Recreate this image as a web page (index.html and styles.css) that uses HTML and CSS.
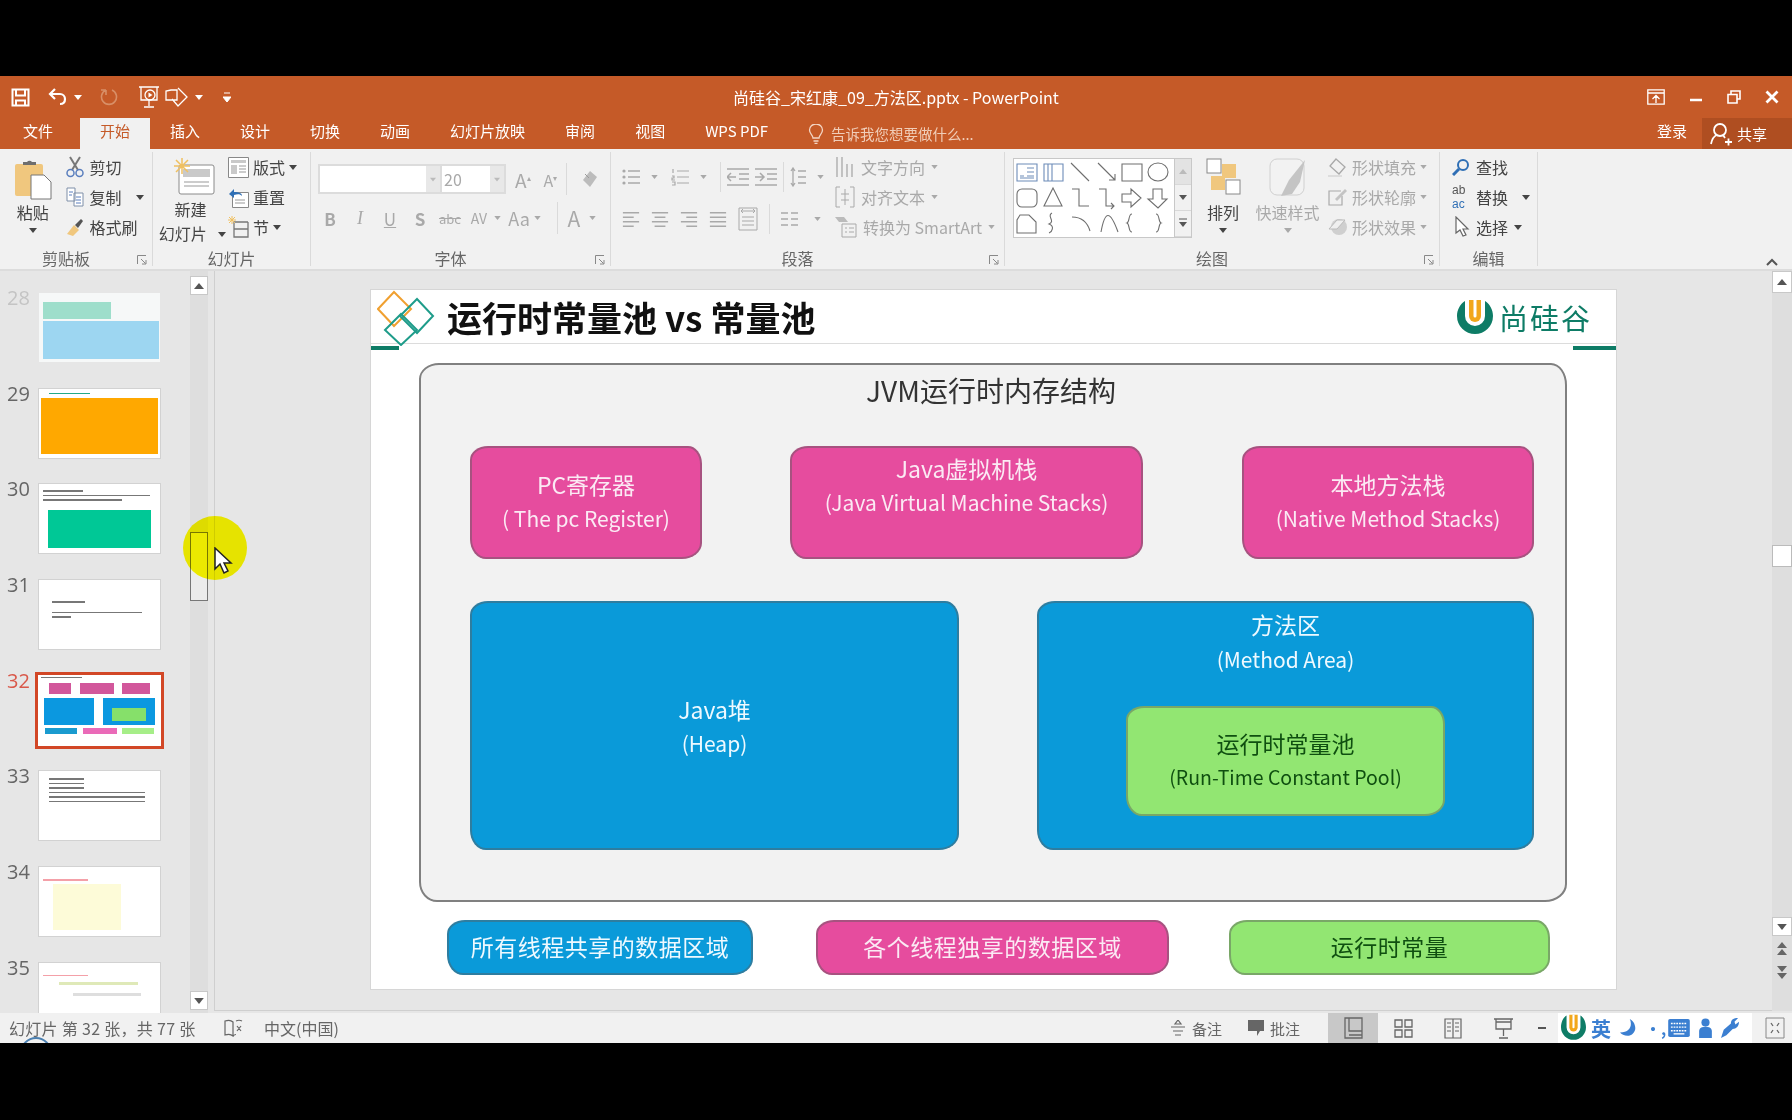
FILE: index.html
```html
<!DOCTYPE html>
<html lang="zh-CN">
<head>
<meta charset="UTF-8">
<title>尚硅谷_宋红康_09_方法区.pptx - PowerPoint</title>
<link rel="stylesheet" href="styles.css">
</head>
<body>
<!-- shared icons -->
<svg class="sprite" width="0" height="0">
  <symbol id="caret" viewBox="0 0 8 5"><path d="M0 0h8L4 5z" fill="currentColor"/></symbol>
  <symbol id="launcher" viewBox="0 0 10 10"><path d="M.5 9V.5H9M4 4l4.500 4.500M9 5v4H5" fill="none" stroke="currentColor"/></symbol>
  <symbol id="lines-left" viewBox="0 0 20 18"><path d="M1 2h18M1 7h12M1 12h18M1 17h12" stroke="currentColor" stroke-width="1.500"/></symbol>
  <symbol id="lines-center" viewBox="0 0 20 18"><path d="M1 2h18M4 7h12M1 12h18M4 17h12" stroke="currentColor" stroke-width="1.500"/></symbol>
  <symbol id="lines-right" viewBox="0 0 20 18"><path d="M1 2h18M7 7h12M1 12h18M7 17h12" stroke="currentColor" stroke-width="1.500"/></symbol>
  <symbol id="lines-full" viewBox="0 0 20 18"><path d="M1 2h18M1 7h18M1 12h18M1 17h18" stroke="currentColor" stroke-width="1.500"/></symbol>
  <symbol id="arrow-up" viewBox="0 0 10 6"><path d="M0 6h10L5 0z" fill="currentColor"/></symbol>
</svg>

<div class="window">
  <header class="titlebar">
    <div class="qat">
      <svg class="qat-save" width="19" height="19" viewBox="0 0 19 19"><path d="M1.500 1.500h16v16h-16zM5 1.500v6h9v-6M5 17.500v-5h9v5" fill="none" stroke="#fff" stroke-width="2"/></svg>
      <svg class="qat-undo" width="20" height="18" viewBox="0 0 20 18"><path d="M7 1L2 6l5 5M2 6h10a5 5 0 0 1 5 5c0 3-2 5-5 5" fill="none" stroke="#fff" stroke-width="2.200"/></svg>
      <svg class="qat-caret" width="8" height="5"><use href="#caret"/></svg>
      <svg class="qat-redo" width="18" height="18" viewBox="0 0 18 18"><path d="M12 2a7.500 7.500 0 1 1-6 0M6 2v5M6 2H1" fill="none" stroke="#d88f67" stroke-width="1.600"/></svg>
      <svg class="qat-show" width="22" height="24" viewBox="0 0 22 24"><path d="M1 2h20M3 2v13h16V2M11 15v6M6 22h10" fill="none" stroke="#fff" stroke-width="1.300"/><circle cx="12" cy="10" r="5" fill="none" stroke="#fff" stroke-width="1.300"/><path d="M10.500 7.500v5l4-2.500z" fill="#fff"/></svg>
      <svg class="qat-shape" width="24" height="24" viewBox="0 0 24 24"><path d="M6 5h6v10H1V6zM13 3l9 9-9 9-6-7" fill="none" stroke="#fff" stroke-width="1.300"/></svg>
      <svg class="qat-caret" width="8" height="5"><use href="#caret"/></svg>
      <svg class="qat-more" width="8" height="10" viewBox="0 0 8 10"><path d="M1 1h6M0 5h8L4 10z" fill="none" stroke="#fff"/><path d="M0 5h8L4 10z" fill="#fff"/></svg>
    </div>
    <div class="doc-title">尚硅谷_宋红康_09_方法区.pptx - PowerPoint</div>
    <div class="win-controls">
      <svg width="18" height="16" viewBox="0 0 18 16"><path d="M.8.8h16.400v14.400H.8zM1 4h16M9 14V7M5.500 10L9 6.500l3.500 3.500" fill="none" stroke="#fff" stroke-width="1.300"/></svg>
      <svg width="14" height="14" viewBox="0 0 14 14"><path d="M1 10h12" stroke="#fff" stroke-width="2.500"/></svg>
      <svg width="14" height="14" viewBox="0 0 14 14"><path d="M1 4.500h9v8.500H1zM4 4V1h9v8h-3" fill="none" stroke="#fff" stroke-width="1.600"/></svg>
      <svg width="14" height="14" viewBox="0 0 14 14"><path d="M1.500 1.500l11 11M12.500 1.500l-11 11" stroke="#fff" stroke-width="2.800"/></svg>
    </div>
  </header>

  <nav class="tabs">
    <span class="tab">文件</span>
    <span class="tab tab-active">开始</span>
    <span class="tab">插入</span>
    <span class="tab">设计</span>
    <span class="tab">切换</span>
    <span class="tab">动画</span>
    <span class="tab">幻灯片放映</span>
    <span class="tab">审阅</span>
    <span class="tab">视图</span>
    <span class="tab">WPS PDF</span>
    <span class="tell-me">
      <svg width="16" height="20" viewBox="0 0 16 20"><path d="M5 14c0-3-3.500-4-3.500-8a6.500 6 0 0 1 13 0c0 4-3.500 5-3.500 8zM5.500 17h5M6.500 19.500h3" fill="none" stroke="#f3d5c4" stroke-width="1.300"/></svg>
      告诉我您想要做什么...
    </span>
    <span class="signin">登录</span>
    <span class="share">
      <svg width="22" height="24" viewBox="0 0 22 24"><circle cx="10" cy="8" r="6" fill="none" stroke="#fff" stroke-width="1.800"/><path d="M1 22c1-5 3-8 6-9M13 13l2 3M15 20h7M18.500 16.500v7" fill="none" stroke="#fff" stroke-width="1.800"/></svg>
      共享
    </span>
  </nav>

  <section class="ribbon">
    <div class="group group-clip">
      <div class="group-body">
        <div class="big-btn big-paste">
          <svg width="38" height="42" viewBox="0 0 38 42"><rect x="1" y="6" width="28" height="32" rx="2" fill="#f0c77e"/><path d="M9 7V4h4a3 3 0 0 1 5 0h4v3z" fill="#6e6e6e"/><path d="M17 17h13l7 7v17H17z" fill="#fff" stroke="#777"/></svg>
          <span>粘贴</span>
          <svg class="big-caret" width="8" height="5"><use href="#caret"/></svg>
        </div>
        <div class="rib-col">
          <div class="rib-row">
            <svg width="18" height="22" viewBox="0 0 18 22"><path d="M4 1l8 13M14 1L6 14" stroke="#777" stroke-width="2"/><circle cx="4.500" cy="17" r="3.500" fill="none" stroke="#5b7fbe" stroke-width="1.500"/><circle cx="13.500" cy="17" r="3.500" fill="none" stroke="#5b7fbe" stroke-width="1.500"/></svg>
            <span>剪切</span>
          </div>
          <div class="rib-row">
            <svg width="18" height="20" viewBox="0 0 18 20"><path d="M1 1h8v13H1zM8 6h9v13H8z" fill="#fff" stroke="#7f8fa8"/><path d="M3 5h4M3 8h3M10 10h5M10 13h5M10 16h5" stroke="#5b7fbe"/></svg>
            <span>复制</span>
            <svg class="row-caret" width="8" height="5"><use href="#caret"/></svg>
          </div>
          <div class="rib-row">
            <svg width="18" height="20" viewBox="0 0 18 20"><path d="M1 17l7-9 5 5-6 6z" fill="#f0c77e"/><path d="M9 8l6-6 2 2-5 7z" fill="#555"/></svg>
            <span>格式刷</span>
          </div>
        </div>
      </div>
      <div class="group-label"><span>剪贴板</span><svg width="10" height="10"><use href="#launcher"/></svg></div>
    </div>

    <div class="group group-slides">
      <div class="group-body">
        <div class="big-btn big-new">
          <svg width="42" height="37" viewBox="0 0 42 37"><rect x="5" y="7" width="35" height="29" rx="2" fill="#fff" stroke="#8a8a8a"/><rect x="9" y="11" width="27" height="8" fill="#c9c9c9"/><path d="M10 24h25M10 28h25" stroke="#999"/><path d="M8 0v16M0 8h16M2 2l12 12M14 2L2 14" stroke="#f0c060" stroke-width="1.500"/></svg>
          <span>新建</span>
          <span class="new-second">幻灯片 <svg width="8" height="5"><use href="#caret"/></svg></span>
        </div>
        <div class="rib-col">
          <div class="rib-row">
            <svg width="21" height="21" viewBox="0 0 21 21"><path d="M.5.500h20v20H.5z" fill="#fff" stroke="#888"/><path d="M3 3h15v3H3zM3 8h6v9H3z" fill="#c9c9c9"/><path d="M11 9h7M11 12h7M11 15h7" stroke="#999"/></svg>
            <span>版式</span>
            <svg width="8" height="5"><use href="#caret"/></svg>
          </div>
          <div class="rib-row">
            <svg width="21" height="21" viewBox="0 0 21 21"><path d="M4.500 5.500h16v15h-16z" fill="#fff" stroke="#888"/><path d="M7 13h10M7 16h10" stroke="#999"/><path d="M1 7l5-5v3c5 0 8 1 8 4-2-2-4-2-8-1v3z" fill="#2f6fb5"/></svg>
            <span>重置</span>
          </div>
          <div class="rib-row">
            <svg width="21" height="22" viewBox="0 0 21 22"><path d="M6 6h14M6 6v15h14V6M6 13h14" fill="none" stroke="#777" stroke-width="1.300"/><path d="M4 0v8M0 4h8M1 1l6 6M7 1L1 7" stroke="#f0c060"/></svg>
            <span>节</span>
            <svg width="8" height="5"><use href="#caret"/></svg>
          </div>
        </div>
      </div>
      <div class="group-label"><span>幻灯片</span></div>
    </div>

    <div class="group group-font dim">
      <div class="group-body font-body">
        <div class="font-row">
          <div class="combo combo-name"><i class="combo-arrow"><svg width="8" height="5"><use href="#caret"/></svg></i></div>
          <div class="combo combo-size"><span>20</span><i class="combo-arrow"><svg width="8" height="5"><use href="#caret"/></svg></i></div>
          <span class="grow-a">A<sup>▴</sup></span>
          <span class="shrink-a">A<sup>▾</sup></span>
          <i class="vsep"></i>
          <svg width="18" height="20" viewBox="0 0 18 20"><path d="M2 11l7-9 7 6-7 10z" fill="#bcbcbc"/><path d="M4 5l4 4" stroke="#9a9a9a"/></svg>
        </div>
        <div class="font-row font-row-2">
          <span class="fbtn fb">B</span>
          <span class="fbtn fi">I</span>
          <span class="fbtn fu">U</span>
          <span class="fbtn fb">S</span>
          <span class="fbtn fabc">abc</span>
          <span class="fbtn fav">AV</span>
          <svg width="7" height="4"><use href="#caret"/></svg>
          <span class="fbtn faa">Aa</span>
          <svg width="7" height="4"><use href="#caret"/></svg>
          <i class="vsep vsep-2"></i>
          <span class="fbtn fcolor">A</span>
          <svg width="7" height="4"><use href="#caret"/></svg>
        </div>
      </div>
      <div class="group-label"><span>字体</span><svg width="10" height="10"><use href="#launcher"/></svg></div>
    </div>

    <div class="group group-para dim">
      <div class="group-body para-body">
        <div class="para-left">
          <div class="para-row">
            <svg width="18" height="18" viewBox="0 0 18 18"><path d="M6 3h12M6 9h12M6 15h12" stroke="currentColor" stroke-width="1.400"/><circle cx="2" cy="3" r="1.600" fill="currentColor"/><circle cx="2" cy="9" r="1.600" fill="currentColor"/><circle cx="2" cy="15" r="1.600" fill="currentColor"/></svg><svg class="pc" width="7" height="4"><use href="#caret"/></svg>
            <svg class="pi" width="18" height="18" viewBox="0 0 18 18"><path d="M6 3h12M6 9h12M6 15h12M2 1v4M1 8h2v2H1v2h3M1 14h3v3H1" fill="none" stroke="currentColor" stroke-width="1.200"/></svg><svg class="pc" width="7" height="4"><use href="#caret"/></svg>
            <i class="vsep para-sep"></i>
            <svg width="22" height="20" viewBox="0 0 22 20"><path d="M0 2h22M12 7h10M12 12h10M0 18h22M9 10H1M4 6l-4 4 4 4" fill="none" stroke="currentColor" stroke-width="1.500"/></svg>
            <svg width="22" height="20" viewBox="0 0 22 20"><path d="M0 2h22M12 7h10M12 12h10M0 18h22M0 10h8M5 6l4 4-4 4" fill="none" stroke="currentColor" stroke-width="1.500"/></svg>
            <i class="vsep para-sep"></i>
            <svg width="16" height="20" viewBox="0 0 16 20"><path d="M3 1v18M1 4l2-3 2 3M1 16l2 3 2-3M8 4h8M8 10h8M8 16h8" fill="none" stroke="currentColor" stroke-width="1.300"/></svg><svg class="pc" width="7" height="4"><use href="#caret"/></svg>
          </div>
          <div class="para-row para-row-2">
            <svg width="18" height="18"><use href="#lines-left"/></svg>
            <svg width="18" height="18"><use href="#lines-center"/></svg>
            <svg width="18" height="18"><use href="#lines-right"/></svg>
            <svg width="18" height="18"><use href="#lines-full"/></svg>
            <svg width="20" height="24" viewBox="0 0 20 24"><path d="M1 1h18v22H1zM3 4h14M5 2l-2 2 2 2M15 2l2 2-2 2M4 10h12M4 14h12M4 18h12" fill="none" stroke="currentColor"/></svg>
            <i class="vsep para-sep"></i>
            <svg width="17" height="16" viewBox="0 0 17 16"><path d="M0 2h7M10 2h7M0 8h7M10 8h7M0 14h7M10 14h7" stroke="currentColor" stroke-width="1.400"/></svg><svg class="pc" width="7" height="4"><use href="#caret"/></svg>
          </div>
        </div>
        <div class="rib-col">
          <div class="rib-row">
            <svg width="20" height="22" viewBox="0 0 20 22"><path d="M2 1v20M7 1v20M12 8v13M17 8v13" stroke="currentColor" stroke-width="1.300"/></svg>
            <span>文字方向</span><svg width="7" height="4"><use href="#caret"/></svg>
          </div>
          <div class="rib-row">
            <svg width="20" height="22" viewBox="0 0 20 22"><path d="M5 1H1v20h4M15 1h4v20h-4M10 3v16M6 8h8M6 14h8" fill="none" stroke="currentColor"/></svg>
            <span>对齐文本</span><svg width="7" height="4"><use href="#caret"/></svg>
          </div>
          <div class="rib-row">
            <svg width="22" height="22" viewBox="0 0 22 22"><path d="M0 1h9l4 5H4z" fill="#bbb"/><path d="M7 8h14v13H7z" fill="none" stroke="currentColor"/><path d="M10 12h2M14 12h5M10 16h2M14 16h5" stroke="currentColor"/></svg>
            <span>转换为 SmartArt</span><svg width="7" height="4"><use href="#caret"/></svg>
          </div>
        </div>
      </div>
      <div class="group-label"><span>段落</span><svg width="10" height="10"><use href="#launcher"/></svg></div>
    </div>

    <div class="group group-draw">
      <div class="group-body draw-body">
        <div class="gallery">
          <svg width="160" height="80" viewBox="0 0 160 80" fill="none" stroke="#6f6f6f" stroke-width="1.100">
            <path d="M3 6h20v17H3z" stroke="#6d8cb8"/><path d="M6 18h4M13 10h7M13 14h7M13 18h7M6 20h14" stroke="#6d8cb8"/>
            <path d="M30 6h19v17H30zM34 6v17M38 6v17" stroke="#6d8cb8"/>
            <path d="M57 5l18 18M84 5l17 17m0-6v6h-6"/>
            <path d="M108 6h20v17h-20z"/><ellipse cx="144" cy="14" rx="10" ry="9"/>
            <rect x="3" y="31" width="20" height="18" rx="5"/><path d="M39 30l9 18H30z"/>
            <path d="M58 31h7v17h10M85 31h7v17h8m-3-3l3 3-3 3"/>
            <path d="M108 36h9v-5l10 9-10 9v-5h-9zM139 31h9v10h5l-9 9-10-9h5z"/>
            <path d="M6 57h9l7 7v11H3V62zM38 55c-6 3 4 8-3 11 6 2 3 8 0 9"/>
            <path d="M58 59c8 0 15 4 18 14M87 74c4-22 9-22 17 0M118 56c-4 0-2 8-5 9 3 1 1 9 5 9M142 56c4 0 2 8 5 9-3 1-1 9-5 9"/>
          </svg>
          <div class="gallery-scroll">
            <span class="gs-btn gs-up"><svg width="8" height="5"><use href="#arrow-up"/></svg></span>
            <span class="gs-btn"><svg width="8" height="5"><use href="#caret"/></svg></span>
            <span class="gs-btn gs-more"><svg width="8" height="10" viewBox="0 0 8 10"><path d="M0 1h8" stroke="#555"/><path d="M0 4h8L4 9z" fill="#555"/></svg></span>
          </div>
        </div>
        <div class="big-btn big-arrange">
          <svg width="36" height="38" viewBox="0 0 36 38"><rect x="16" y="6" width="14" height="14" fill="#f0c77e"/><rect x="5" y="18" width="14" height="14" fill="#f0c77e"/><rect x="1" y="1" width="14" height="14" fill="#fff" stroke="#888"/><rect x="20" y="22" width="14" height="14" fill="#fff" stroke="#888"/></svg>
          <span>排列</span>
          <svg class="big-caret" width="8" height="5"><use href="#caret"/></svg>
        </div>
        <div class="big-btn big-style dim">
          <svg width="38" height="42" viewBox="0 0 38 42"><rect x="1" y="1" width="34" height="36" rx="7" fill="#f2f2f2" stroke="#d0d0d0"/><path d="M12 38l8-16 16-20-5 22-8 12z" fill="#c4c4c4"/></svg>
          <span>快速样式</span>
          <svg class="big-caret" width="8" height="5"><use href="#caret"/></svg>
        </div>
        <div class="rib-col dim">
          <div class="rib-row">
            <svg width="20" height="20" viewBox="0 0 20 20"><path d="M8 2l9 8-6 7-9-8z" fill="none" stroke="currentColor" stroke-width="1.300"/><path d="M0 18h14v2H0z" fill="#ddd"/></svg>
            <span>形状填充</span><svg width="7" height="4"><use href="#caret"/></svg>
          </div>
          <div class="rib-row">
            <svg width="20" height="20" viewBox="0 0 20 20"><path d="M13 4H1v14h13V9" fill="none" stroke="currentColor" stroke-width="1.200"/><path d="M7 12l10-10 2 2L9 14z" fill="#c4c4c4"/></svg>
            <span>形状轮廓</span><svg width="7" height="4"><use href="#caret"/></svg>
          </div>
          <div class="rib-row">
            <svg width="20" height="20" viewBox="0 0 20 20"><circle cx="11" cy="10" r="8" fill="#cfcfcf"/><path d="M1 12l8-9h8l-8 9z" fill="#efefef" stroke="#bbb"/></svg>
            <span>形状效果</span><svg width="7" height="4"><use href="#caret"/></svg>
          </div>
        </div>
      </div>
      <div class="group-label"><span>绘图</span><svg width="10" height="10"><use href="#launcher"/></svg></div>
    </div>

    <div class="group group-edit">
      <div class="group-body">
        <div class="rib-col">
          <div class="rib-row">
            <svg width="18" height="18" viewBox="0 0 18 18"><circle cx="11" cy="7" r="5" fill="none" stroke="#2f6fb5" stroke-width="2"/><path d="M7 11l-6 6" stroke="#2f6fb5" stroke-width="3"/></svg>
            <span>查找</span>
          </div>
          <div class="rib-row">
            <span class="replace-icon">ab<br><b>ac</b></span>
            <span>替换</span><svg class="row-caret" width="8" height="5"><use href="#caret"/></svg>
          </div>
          <div class="rib-row">
            <svg width="18" height="22" viewBox="0 0 18 22"><path d="M4 1v16l4-3 3 6 3-1-3-6h5z" fill="#fff" stroke="#666" stroke-width="1.200"/></svg>
            <span>选择</span><svg width="8" height="5"><use href="#caret"/></svg>
          </div>
        </div>
      </div>
      <div class="group-label"><span>编辑</span></div>
    </div>

    <svg class="collapse" width="12" height="8" viewBox="0 0 12 8"><path d="M1 7l5-5 5 5" fill="none" stroke="#555" stroke-width="2"/></svg>
  </section>

  <main class="workspace">
    <aside class="thumb-pane">
      <div class="thumb-row faded"><span class="thumb-num">28</span>
        <div class="thumb t28"><i class="t28-green"></i><i class="t28-blue"></i></div></div>
      <div class="thumb-row"><span class="thumb-num">29</span>
        <div class="thumb t29"><i class="ln ln-s"></i><i class="t29-fill"></i></div></div>
      <div class="thumb-row"><span class="thumb-num">30</span>
        <div class="thumb t30"><i class="ln ln-s"></i><i class="ln ln-l"></i><i class="ln ln-m"></i><i class="t30-fill"></i></div></div>
      <div class="thumb-row"><span class="thumb-num">31</span>
        <div class="thumb t31"><i class="ln ln-s"></i><i class="ln ln-l"></i><i class="ln ln-xs"></i></div></div>
      <div class="thumb-row current"><span class="thumb-num">32</span>
        <div class="thumb t32">
          <i class="ln ln-s"></i>
          <div class="m-row"><i class="m-p m-a"></i><i class="m-p m-b"></i><i class="m-p m-c"></i></div>
          <div class="m-row m-row-2"><i class="m-heap"></i><i class="m-area"><b></b></i></div>
          <div class="m-row m-row-3"><i class="m-l1"></i><i class="m-l2"></i><i class="m-l3"></i></div>
        </div></div>
      <div class="thumb-row"><span class="thumb-num">33</span>
        <div class="thumb t33"><i class="ln ln-s"></i><i class="ln ln-s"></i><i class="ln ln-s"></i><i class="ln ln-l"></i><i class="ln ln-l"></i><i class="ln ln-l"></i></div></div>
      <div class="thumb-row"><span class="thumb-num">34</span>
        <div class="thumb t34"><i class="t34-red"></i><i class="t34-fill"></i></div></div>
      <div class="thumb-row"><span class="thumb-num">35</span>
        <div class="thumb t35"><i class="t34-red"></i><i class="t35-a"></i><i class="t35-b"></i></div></div>
    </aside>
    <div class="thumb-scroll">
      <span class="sb-btn"><svg width="10" height="6"><use href="#arrow-up"/></svg></span>
      <span class="sb-thumb"></span>
      <span class="sb-btn sb-down"><svg width="10" height="6"><use href="#caret"/></svg></span>
    </div>

    <div class="stage">
      <article class="slide">
        <div class="slide-head">
          <svg class="slide-mark" width="58" height="56" viewBox="0 0 58 56" fill="none" stroke-width="2">
            <path d="M16 2l17 17-17 17L0 19z" stroke="#f0a030" transform="translate(1 0)"/>
            <path d="M40 9l16 17-16 17-17-17z" stroke="#1e9c8a"/>
            <path d="M24 24l16 16-16 15L8 40z" stroke="#1e9c8a"/>
          </svg>
          <h1 class="slide-title">运行时常量池 vs 常量池</h1>
          <div class="brand">
            <svg width="36" height="34" viewBox="0 0 36 34"><path d="M8 1v15a10 10 0 0 0 20 0V1c5 3 8 9 8 15a18 18 0 0 1-36 0C0 10 3 4 8 1z" fill="#0e7c66"/><path d="M12 0h12v16a6 6 0 0 1-12 0z" fill="#f2a71b"/><path d="M16.500 0h3v16a1.500 1.500 0 0 1-3 0z" fill="#fff"/></svg>
            <span>尚硅谷</span>
          </div>
        </div>
        <div class="slide-rule"><i></i><i></i></div>

        <section class="jvm">
          <h2 class="jvm-title">JVM运行时内存结构</h2>
          <div class="jvm-row">
            <div class="blob pink box-pc">PC寄存器<br><span class="en">( The pc Register)</span></div>
            <div class="blob pink box-stack">Java虚拟机栈<br><span class="en">(Java Virtual Machine Stacks)</span></div>
            <div class="blob pink box-native">本地方法栈<br><span class="en">(Native Method Stacks)</span></div>
          </div>
          <div class="jvm-row jvm-row-2">
            <div class="blob blue box-heap">Java堆<br><span class="en">(Heap)</span></div>
            <div class="blob blue box-method">
              <div>方法区<br><span class="en">(Method Area)</span></div>
              <div class="blob green box-pool">运行时常量池<br><span class="en">(Run-Time Constant Pool)</span></div>
            </div>
          </div>
        </section>

        <div class="legend">
          <div class="blob blue leg-a">所有线程共享的数据区域</div>
          <div class="blob pink leg-b">各个线程独享的数据区域</div>
          <div class="blob green leg-c">运行时常量</div>
        </div>
      </article>
    </div>

    <div class="stage-scroll">
      <span class="sb-btn"><svg width="10" height="6"><use href="#arrow-up"/></svg></span>
      <span class="sb-thumb"></span>
      <span class="sb-btn sb-down"><svg width="10" height="6"><use href="#caret"/></svg></span>
      <svg class="page-arrow" width="12" height="14" viewBox="0 0 12 14"><path d="M6 0l5 6H1zM6 7l5 6H1z" fill="#666"/></svg>
      <svg class="page-arrow" width="12" height="14" viewBox="0 0 12 14"><path d="M6 7l5-6H1zM6 14l5-6H1z" fill="#666"/></svg>
    </div>

    <!-- screen recorder highlight -->
    <div class="pointer-glow"></div>
    <svg class="pointer" width="20" height="28" viewBox="0 0 20 28"><path d="M1 1v21l5-5 4 9 4-2-4-8h7z" fill="#fff" stroke="#222" stroke-width="1.500"/></svg>
  </main>

  <footer class="statusbar">
    <span class="st-count">幻灯片 第 32 张，共 77 张</span>
    <svg class="st-spell" width="19" height="18" viewBox="0 0 19 18"><path d="M9 3C7 1 4 1 1 2v14c3-1 6-1 8 1V3zM9 17c1-1 2-1.500 3-1.500M12 2c2-1 4-1 6 0M13 7l4 5M17 7l-4 5" fill="none" stroke="#666" stroke-width="1.200"/></svg>
    <span class="st-lang">中文(中国)</span>
    <span class="st-right">
      <svg class="st-note" width="14" height="16" viewBox="0 0 14 16"><path d="M7 0l3 4H4zM0 7h14M2 11h10M4 15h6" fill="none" stroke="#666" stroke-width="1.200"/></svg>
      <span>备注</span>
      <svg class="st-comment" width="16" height="18" viewBox="0 0 16 18"><path d="M0 1h16v11h-4l-3 5v-5H0z" fill="#666"/></svg>
      <span>批注</span>
      <span class="view-btn view-active"><svg width="19" height="22" viewBox="0 0 19 22"><path d="M1 1h17v20H1zM5 1v13h13M5 18h13" fill="none" stroke="#666" stroke-width="1.300"/></svg></span>
      <span class="view-btn"><svg width="19" height="19" viewBox="0 0 19 19"><path d="M1 1h7v7H1zM11 1h7v7h-7zM1 11h7v7H1zM11 11h7v7h-7z" fill="none" stroke="#666" stroke-width="1.300"/></svg></span>
      <span class="view-btn"><svg width="18" height="21" viewBox="0 0 18 21"><path d="M1 1h16v19H1zM9 1v19M3 5h4M3 9h4M3 13h4M11 5h4M11 9h4M11 13h4" fill="none" stroke="#666" stroke-width="1.200"/></svg></span>
      <span class="view-btn"><svg width="19" height="21" viewBox="0 0 19 21"><path d="M0 1h19M2 1v10h15V1M2 4h15M9.500 11v7M5 20h9" fill="none" stroke="#666" stroke-width="1.300"/></svg></span>
      <span class="zoom-minus"></span>
    </span>
    <div class="ime">
      <svg width="25" height="28" viewBox="0 0 36 40"><path d="M8 2v17a10 10 0 0 0 20 0V2c5 3 8 10 8 17a18 18 0 0 1-36 0C0 12 3 5 8 2z" fill="#0e7c66"/><path d="M12 1h12v18a6 6 0 0 1-12 0z" fill="#f2a71b"/><path d="M16.500 1h3v18a1.500 1.500 0 0 1-3 0z" fill="#fff"/></svg>
      <span class="ime-lang">英</span>
      <svg width="16" height="18" viewBox="0 0 18 20"><path d="M11 0c3 6 1 15-11 15 3 4 14 7 17-3 1-5-2-10-6-12z" fill="#3b7fd1"/></svg>
      <span class="ime-punct">•,</span>
      <svg width="22" height="18" viewBox="0 0 24 20"><rect width="24" height="20" rx="2" fill="#3b7fd1"/><path d="M3 5h18M3 9h18M3 13h18" stroke="#fff" stroke-width="1.500" stroke-dasharray="2 1"/><path d="M6 16.500h12" stroke="#fff" stroke-width="1.500"/></svg>
      <svg width="13" height="20" viewBox="0 0 14 22"><circle cx="7" cy="5" r="4.500" fill="#3b7fd1"/><path d="M0 22v-8a5 5 0 0 1 5-4h4a5 5 0 0 1 5 4v8z" fill="#3b7fd1"/></svg>
      <svg width="18" height="20" viewBox="0 0 20 22"><path d="M0 22l3-9L11 6c0-4 3-6 8-6l-4 4 1 3 4-3c0 5-3 8-7 8l-7 7z" fill="#3b7fd1"/></svg>
    </div>
    <svg class="st-fit" width="20" height="22" viewBox="0 0 20 22"><path d="M1 1h18v20H1z" fill="none" stroke="#888"/><path d="M6 6l2 3M14 6l-2 3M6 16l2-3M14 16l-2-3" stroke="#666" stroke-width="1.300"/></svg>
    <i class="st-arc"></i>
  </footer>
</div>
</body>
</html>
```
FILE: styles.css
```css
* {
    box-sizing: border-box;
}
html, body {
    margin: 0;
    height: 1120px;
    overflow: hidden;
    background: #000;
}
body {
    font-family: "Noto Sans CJK SC", "Noto Sans", sans-serif;
    font-size: 16px;
    color: #444;
}
.sprite {
    display: block;
    height: 0;
}
i {
    display: block;
}
svg {
    flex: none;
}
.window {
    margin-top: 76px;
    width: 1792px;
    height: 967px;
    display: flex;
    flex-direction: column;
    background: #f1f1f1;
    filter: blur(0.45px);
}

/* title bar */
.titlebar {
    height: 42px;
    background: #c55a28;
    display: grid;
    grid-template-columns: 1fr auto 1fr;
    align-items: center;
    color: #fff;
}
.qat {
    display: flex;
    align-items: center;
    color: #fff;
    padding-left: 11px;
}
.qat-undo { margin-left: 18px; }
.qat .qat-caret { margin-left: 6px; }
.qat-redo { margin-left: 18px; color: #d88f67; }
.qat-show { margin-left: 20px; }
.qat-shape { margin-left: 5px; }
.qat-more { margin-left: 20px; }
.doc-title {
    font-size: 16px;
    line-height: 38px;
}
.win-controls {
    display: flex;
    align-items: center;
    justify-content: flex-end;
    gap: 24px;
    padding-right: 13px;
}

/* tabs */
.tabs {
    height: 31px;
    background: #c55a28;
    display: flex;
    align-items: stretch;
    padding-left: 3px;
    color: #fff;
    font-size: 15px;
    line-height: 26px;
}
.tab {
    padding: 0 20px;
}
.tab-active {
    margin-left: 7px;
    background: #f1f1f1;
    color: #c55a28;
}
.tell-me {
    display: flex;
    align-items: center;
    gap: 7px;
    margin-left: 20px;
    color: #f0cdb8;
    font-size: 14.500px;
}
.signin {
    margin-left: auto;
    padding-right: 15px;
}
.share {
    width: 90px;
    background: #af4e21;
    display: flex;
    align-items: center;
    gap: 5px;
    padding-left: 8px;
}

/* ribbon */
.ribbon {
    height: 122px;
    display: flex;
    position: relative;
    background: #f1f1f1;
    border-bottom: 2px solid #dcdcdc;
    padding-top: 3px;
}
.group {
    height: 114px;
    border-right: 1px solid #dadada;
    color: #444;
}
.group-clip { width: 153px; }
.group-slides { width: 158px; }
.group-font { width: 300px; }
.group-para { width: 394px; }
.group-draw { width: 435px; }
.group-edit { width: 98px; }
.group-body {
    height: 96px;
    display: flex;
}
.group-label {
    display: flex;
    align-items: center;
    height: 20px;
    color: #666;
}
.group-label span {
    flex: 1;
    text-align: center;
}
.group-label svg {
    color: #888;
    margin: 4px 5px 0 5px;
}
.dim {
    color: #a9a9a9;
}
.dim .group-label {
    color: #666;
}
.rib-col {
    display: flex;
    flex-direction: column;
}
.rib-row {
    height: 30px;
    display: flex;
    align-items: center;
    gap: 6px;
    white-space: nowrap;
}
.row-caret {
    margin-left: 8px;
}
.group-slides .rib-row {
    gap: 4px;
}
.big-btn {
    display: flex;
    flex-direction: column;
    align-items: center;
    padding-top: 6px;
    line-height: 20px;
    white-space: nowrap;
}
.big-paste { width: 66px; }
.big-paste span { margin-top: 2px; }
.big-new { width: 75px; line-height: 23.500px; }
.big-new svg:first-child { margin: 0 0 3px 8px; }
.new-second { margin-left: 4px; }
.big-caret { margin-top: 6px; }
.group-clip .rib-col { width: 87px; }
.group-edit .group-body { padding-left: 12px; }
.replace-icon {
    width: 18px;
    font-family: "Liberation Sans", sans-serif;
    font-size: 12px;
    line-height: 14px;
    color: #555;
}
.replace-icon b {
    font-weight: 400;
    color: #2f6fb5;
}

/* font group */
.font-body {
    flex-direction: column;
    padding: 12px 0 0 7px;
}
.font-row {
    display: flex;
    align-items: center;
    height: 30px;
}
.combo {
    height: 30px;
    background: #fff;
    border: 2px solid #dcdcdc;
    display: flex;
    justify-content: flex-end;
    align-items: stretch;
}
.combo-name { width: 122px; border-right: 0; }
.combo-size { width: 66px; justify-content: space-between; }
.combo-size span { padding-left: 2px; font-size: 16px; line-height: 26px; }
.combo-arrow {
    width: 14px;
    background: #e8e8e8;
    display: flex;
    align-items: center;
    justify-content: center;
    color: #bbb;
}
.combo-arrow svg { width: 6px; }
.grow-a, .shrink-a {
    font-size: 19px;
    margin-left: 9px;
    line-height: 26px;
    color: #aaa;
}
.shrink-a { font-size: 16px; margin-left: 13px; }
.grow-a sup, .shrink-a sup { font-size: 8px; }
.vsep {
    width: 1px;
    height: 32px;
    background: #dadada;
    margin: 0 14px 0 9px;
}
.font-row-2 {
    margin-top: 9px;
    margin-left: -3px;
    gap: 0;
}
.fbtn {
    width: 30px;
    text-align: center;
    font-size: 17px;
}
.fb { font-weight: 700; }
.fi { font-style: italic; font-family: "Liberation Serif", serif; font-size: 18px; }
.fu { text-decoration: underline; }
.fabc { font-size: 13px; text-decoration: line-through; }
.fav { font-size: 14px; margin-left: -1px; }
.faa { font-size: 18px; margin-left: 3px; }
.fcolor { font-size: 21px; margin-left: -2px; }
.vsep-2 { margin: 0 3px 0 16px; }

/* paragraph group */
.para-body {
    padding-left: 11px;
}
.para-left {
    width: 213px;
    padding-top: 15px;
}
.para-row {
    display: flex;
    align-items: center;
    height: 20px;
    gap: 6px;
}
.para-row .pc { margin: 0 7px 0 5px; }
.para-row .pi { margin-left: 0; }
.para-row-2 {
    margin-top: 22px;
    gap: 11px;
}
.para-sep {
    margin: 0;
    height: 30px;
}

/* drawing group */
.draw-body {
    padding-left: 8px;
}
.gallery {
    width: 179px;
    height: 80px;
    margin-top: 6px;
    background: #fff;
    border: 1px solid #c8c8c8;
    display: flex;
    justify-content: space-between;
}
.gallery svg:first-child {
    margin-top: -1px;
}
.gallery-scroll {
    width: 18px;
    display: flex;
    flex-direction: column;
    background: #f1f1f1;
    border-left: 1px solid #c8c8c8;
    color: #555;
}
.gs-btn {
    flex: 1;
    display: flex;
    align-items: center;
    justify-content: center;
    border-bottom: 1px solid #d8d8d8;
}
.gs-up { background: #e3e3e3; color: #bbb; }
.big-arrange { width: 58px; margin-left: 2px; }
.big-style { width: 71px; }
.big-arrange span { margin-top: 6px; }
.big-style span { margin-top: 2px; }
.big-arrange svg:first-child { margin-left: 2px; }
.draw-body .rib-col { margin-left: 5px; }
.draw-body .rib-row { gap: 4px; }

.collapse {
    position: absolute;
    right: 14px;
    top: 109px;
}

/* workspace */
.workspace {
    position: relative;
    height: 742px;
    display: flex;
    background: #e6e6e6;
}
.thumb-pane {
    width: 190px;
    padding-top: 21px;
    overflow: hidden;
}
.thumb-row {
    display: flex;
    height: 95.700px;
}
.thumb-num {
    width: 38px;
    padding-left: 7px;
    margin-top: -2px;
    font-family: "Open Sans", sans-serif;
    font-size: 20px;
    line-height: 16px;
    color: #666;
}
.faded .thumb-num { color: #c4c4c4; }
.current .thumb-num { color: #d9584a; }
.thumb {
    width: 123px;
    height: 71px;
    flex: none;
    background: #fff;
    border: 1px solid #d2d2d2;
    overflow: hidden;
    padding: 3px 4px;
}
.ln {
    height: 1.500px;
    margin: 3px 0;
    background: #777;
    filter: blur(0.6px);
}
.ln-xs { width: 20%; }
.ln-s { width: 35%; }
.ln-m { width: 70%; }
.ln-l { width: 95%; }
.faded .thumb {
    background: #f6f8f8;
    border-color: #e6e6e6;
}
.t28-green {
    width: 68px;
    height: 17px;
    margin-top: 6px;
    background: #9edecb;
}
.t28-blue {
    width: 116px;
    height: 38px;
    margin-top: 2px;
    background: #9dd6f1;
}
.t29 { padding: 3px 2px; }
.t29-fill {
    height: 56px;
    margin-top: 4px;
    background: #ffa800;
}
.t29 .ln { background: #2a8; margin: 1px 0 0 8px; }
.t30-fill {
    height: 38px;
    margin: 9px 5px 0;
    background: #00c896;
}
.t31 { padding: 18px 13px; }
.t31 .ln:nth-child(2) { margin-top: 9px; }
.t33 { padding: 4px 10px; }
.t34-red {
    width: 40%;
    height: 1.500px;
    margin-top: 9px;
    background: #f4a0a8;
}
.t34-fill {
    width: 60%;
    height: 46px;
    margin: 3px 0 0 10px;
    background: #fdfbd8;
}
.t35-a {
    width: 70%;
    height: 3px;
    margin: 6px 0 0 16px;
    background: #dfe9b8;
}
.t35-b {
    width: 60%;
    height: 3px;
    margin: 8px 0 0 30px;
    background: #dedede;
}
.current .thumb {
    outline: 3px solid #d24726;
    padding: 1px 3px;
    border: 0;
}
.t32 .ln { margin: 1px 0 5px; height: 1px; }
.m-row {
    display: flex;
    justify-content: space-between;
    padding: 0 8px;
}
.m-p { height: 11px; background: #d2579b; }
.m-a { width: 22px; }
.m-b { width: 34px; }
.m-c { width: 28px; }
.m-row-2 { margin-top: 4px; padding: 0 3px; }
.m-heap { width: 50px; height: 27px; background: #0b98e0; }
.m-area {
    width: 52px;
    height: 27px;
    background: #0b98e0;
    padding: 10px 9px 4px;
}
.m-area b { display: block; height: 13px; background: #86e06a; }
.m-row-3 { margin-top: 3px; padding: 0 4px; }
.m-l1 { width: 32px; height: 6px; background: #1a9bcf; }
.m-l2 { width: 34px; height: 6px; background: #ea6ab8; }
.m-l3 { width: 32px; height: 6px; background: #a6ee88; }

.thumb-scroll {
    width: 18px;
    margin-right: 6px;
    padding-top: 5px;
    padding-bottom: 3px;
    background: #dedede;
    display: flex;
    flex-direction: column;
}
.sb-btn {
    height: 19px;
    flex: none;
    display: flex;
    align-items: center;
    justify-content: center;
    background: #fff;
    border: 1px solid #c8c8c8;
    color: #555;
}
.sb-down {
    margin-top: auto;
}
.sb-thumb {
    height: 69px;
    margin-top: 237px;
    background: #ececec;
    border: 1px solid #777;
}
.stage {
    flex: 1;
    display: flex;
    justify-content: center;
    padding-top: 18px;
    margin-bottom: 2px;
    border-left: 1px solid #cfcfcf;
    border-bottom: 1px solid #cfcfcf;
}
.stage-scroll {
    width: 20px;
    flex: none;
    background: #dedede;
    display: flex;
    flex-direction: column;
    align-items: center;
    padding-bottom: 32px;
    margin-bottom: 2px;
}
.stage-scroll .sb-btn { width: 20px; height: 22px; }
.stage-scroll .sb-thumb {
    width: 20px;
    height: 22px;
    margin-top: 252px;
    background: #fff;
    border-color: #bbb;
}
.stage-scroll .sb-down { height: 19px; margin-top: auto; }
.page-arrow { margin-top: 9px; }
.sb-down + .page-arrow { margin-top: 6px; }

.pointer-glow {
    position: absolute;
    left: 183px;
    top: 245px;
    width: 64px;
    height: 64px;
    border-radius: 50%;
    background: #fffc00;
    mix-blend-mode: multiply;
}
.pointer {
    position: absolute;
    left: 214px;
    top: 276px;
}

/* slide */
.slide {
    width: 1247px;
    height: 701px;
    flex: none;
    background: #fff;
    border: 1px solid #d6d6d6;
}
.slide-head {
    height: 54px;
    display: flex;
    align-items: center;
    border-bottom: 1px solid #dcdcdc;
    padding: 0 24px 0 6px;
}
.slide-mark {
    margin-top: 3px;
}
.slide-title {
    margin: 0 0 0 12px;
    font-size: 35px;
    font-weight: 700;
    color: #111;
}
.brand {
    margin-left: auto;
    display: flex;
    align-items: center;
    gap: 6px;
    color: #0e7c66;
    font-size: 29px;
    letter-spacing: 2px;
}
.slide-rule {
    height: 4px;
    margin-top: 2px;
    display: flex;
    justify-content: space-between;
}
.slide-rule i {
    width: 28px;
    background: #0e7c66;
}
.slide-rule i + i {
    width: 43px;
}
.jvm {
    width: 1148px;
    height: 539px;
    margin: 13px 0 0 48px;
    padding: 0 0 0 49px;
    background: #f2f2f2;
    border: 2px solid #808080;
    border-radius: 20px 16px 22px 18px / 16px 22px 18px 20px;
}
.jvm-title {
    margin: 0 0 31px;
    height: 50px;
    line-height: 50px;
    padding-right: 53px;
    text-align: center;
    font-size: 28px;
    font-weight: 400;
    color: #333;
}
.jvm-row {
    display: flex;
    height: 113px;
}
.jvm-row-2 {
    height: 249px;
    margin-top: 42px;
}
.blob {
    display: flex;
    flex-direction: column;
    justify-content: center;
    text-align: center;
    color: #fbeaf4;
    font-size: 23px;
    line-height: 34px;
    padding-bottom: 3px;
    border: 2px solid rgba(90, 90, 90, 0.45);
    border-radius: 18px 14px 20px 16px / 14px 18px 16px 20px;
}
.en { font-size: 21px; }
.pink { background: #e64c9e; }
.blue { background: #0a9ad9; color: #eef9ff; }
.green { background: #92e672; color: #0f4f10; }
.box-pc { width: 232px; }
.box-stack { width: 353px; margin-left: 88px; padding-bottom: 36px; }
.box-native { width: 292px; margin-left: 99px; }
.box-heap { width: 489px; padding-bottom: 0; }
.box-method {
    width: 497px;
    margin-left: 78px;
    justify-content: flex-start;
    align-items: center;
    padding-top: 4px;
}
.box-pool {
    width: 319px;
    height: 110px;
    margin-top: 30px;
}
.box-pool .en { font-size: 19.500px; }
.legend {
    display: flex;
    height: 55px;
    margin: 18px 0 0 76px;
}
.leg-a { width: 306px; }
.leg-b { width: 353px; margin-left: 63px; }
.leg-c { width: 321px; margin-left: 60px; }
.legend .blob { letter-spacing: 0.500px; }

/* status bar */
.statusbar {
    position: relative;
    height: 30px;
    display: flex;
    align-items: center;
    background: #f1f1f1;
    color: #666;
    padding-left: 9px;
    overflow: hidden;
}
.st-count { width: 215px; white-space: nowrap; letter-spacing: 0.3px; }
.st-lang { margin-left: 21px; }
.st-right {
    position: absolute;
    left: 1171px;
    top: 0;
    height: 30px;
    display: flex;
    align-items: center;
    font-size: 15px;
}
.st-note { margin-right: 7px; }
.st-comment { margin: 0 6px 0 26px; }
.view-btn {
    width: 50px;
    height: 30px;
    display: flex;
    align-items: center;
    justify-content: center;
}
.view-active { margin-left: 28px; background: #c8c8c8; }
.zoom-minus {
    width: 8px;
    height: 2px;
    margin-left: 10px;
    background: #555;
}
.ime {
    position: absolute;
    left: 1558px;
    top: 0;
    width: 194px;
    height: 30px;
    display: flex;
    align-items: center;
    gap: 9px;
    padding-left: 3px;
    background: #fff;
    color: #3b7fd1;
}
.ime-lang { font-size: 20px; font-weight: 700; margin-left: -4px; }
.ime-punct { width: 14px; font-size: 16px; font-weight: 700; }
.st-fit {
    position: absolute;
    left: 1765px;
    top: 4px;
}
.st-arc {
    position: absolute;
    left: 20px;
    top: 24px;
    width: 32px;
    height: 32px;
    border: 2px solid #4a7fb0;
    border-radius: 50%;
}
```
